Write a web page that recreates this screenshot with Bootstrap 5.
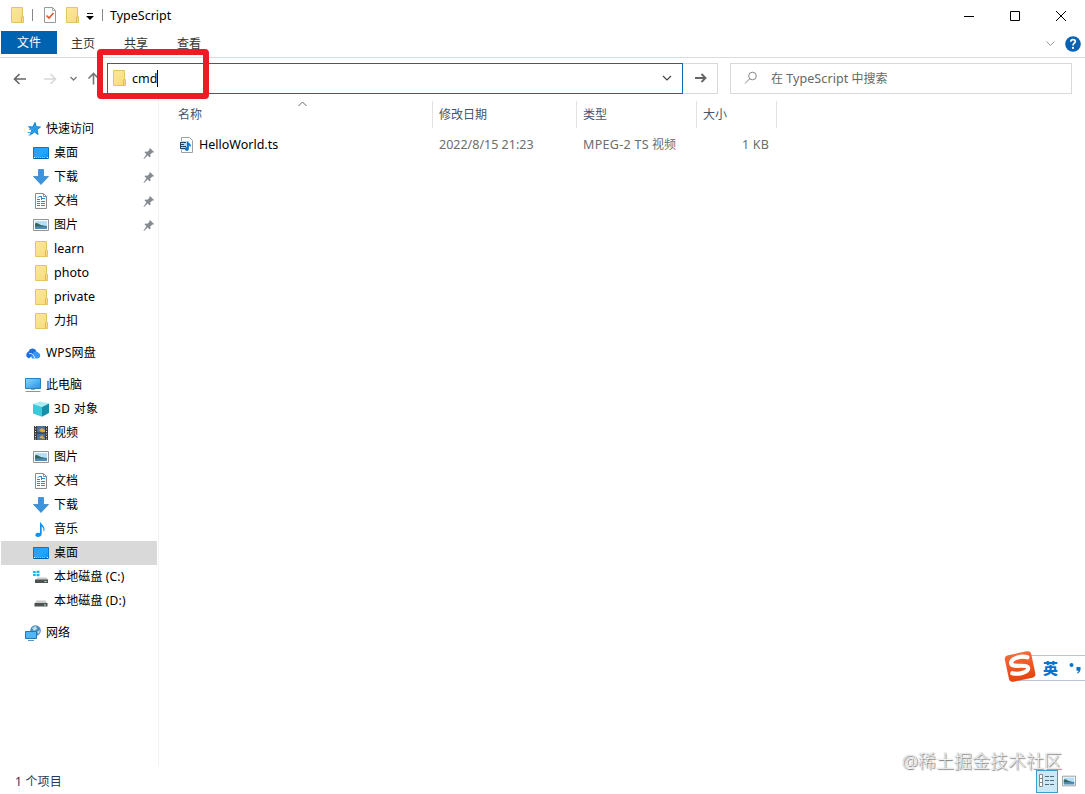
<!DOCTYPE html>
<html lang="zh-CN">
<head>
<meta charset="utf-8">
<meta name="viewport" content="width=device-width, initial-scale=1">
<title>TypeScript</title>
<link href="https://cdn.jsdelivr.net/npm/bootstrap@5.3.0/dist/css/bootstrap.min.css" rel="stylesheet">
<style>
body{font-family:"Noto Sans","Noto Sans CJK SC",sans-serif;font-size:12px;line-height:18px;color:#000;background:#fff;height:794px;overflow:hidden}
svg{display:block;flex:none}
.en{font-size:12.5px}
.titlebar{height:31px;padding-left:9px}
.titlebar>svg{margin-bottom:1px}
.vbar{width:1px;height:12px;background:#888;margin-bottom:1px}
.winctl{width:46px;height:31px}
.winctls{margin-right:1px}
.tabs{height:27px;border-bottom:1px solid #dadbdc;padding-left:1px}
.tab-file{width:56px;height:23px;padding-top:1px;background:#0063b1;color:#fff}
.tab-item{width:53px;height:26px;color:#333;padding-right:1px}
.address-row{height:40px}
.address{width:576px;height:31px;border:1px solid #0a6cb4;padding-left:4px;padding-right:10px}
.address span,.search span{padding-top:1px}
.search .en{padding-top:0}
.go{width:35px;height:31px;border:1px solid #d9d9d9;border-left:0}
.search{width:342px;height:31px;border:1px solid #d9d9d9;color:#666;padding-left:13px}
.caret{width:1px;height:17px;background:#000}
.highlight-box{left:97px;top:49px;width:112px;height:50px;border:6px solid #ed1c24;border-radius:4px}
.side{width:159px;height:668px;border-right:1px solid #f3f3f3;padding-top:19px}
.side-row{height:24px;width:156px;margin-left:1px;padding-left:32px;padding-right:2px}
.side-row.root{padding-left:24px}
.side-row.selected{background:#d9d9d9}
.side-row span{margin-left:5px}
.heads{height:30px;padding-top:3px;color:#44546f}
.heads>div{height:27px;border-right:1px solid #e3e3e3;padding-left:6px;padding-top:5px}
.c1{width:274px}.c2{width:144px}.c3{width:120px}.c4{width:80px}
.file-row{height:24px;margin-top:5px;color:#6d6d6d}
.file-row>div{padding-left:6px}
.wide{font-size:12.5px;letter-spacing:.3px}
.status{height:28px;padding:2px 9px 0 15px;color:#1e395b}
.view-active{width:22px;height:23px;border:1px solid #3aa0cf;background:#cce8f6}
.ime{left:1003px;top:649px;width:82px;height:34px}
.ime-bar{left:16px;top:6px;right:0;height:26px;border:1px solid #b9c4d4;border-right:0;background:#fff;color:#0873cc;padding-left:23px}
.ime-bar b{font-size:15px;font-weight:900}
.watermark{left:902px;top:748px;font-size:18px;line-height:26px;font-weight:300;color:#f4f4f4;text-shadow:1px 1px 1px #777,0 0 1px #999;white-space:nowrap}
</style>
<script src="https://cdn.jsdelivr.net/npm/bootstrap@5.3.0/dist/js/bootstrap.bundle.min.js"></script>
</head>
<body class="position-relative d-flex flex-column">
<svg width="0" height="0" class="position-absolute" aria-hidden="true">
<defs>
<linearGradient id="gBlue" x2="1" y2="1"><stop stop-color="#2a9df4"/><stop offset=".5" stop-color="#22a7ff"/><stop offset="1" stop-color="#1593f0"/></linearGradient>
<linearGradient id="gPc" x2="1" y2="1"><stop stop-color="#8fd6fb"/><stop offset="1" stop-color="#1d93e4"/></linearGradient>
<linearGradient id="gFold" x2="1" y2="1"><stop stop-color="#fce79e"/><stop offset="1" stop-color="#f8db7c"/></linearGradient>
<linearGradient id="gIme" x2="0" y2="1"><stop stop-color="#f26b3a"/><stop offset="1" stop-color="#e8430c"/></linearGradient>
</defs>
<symbol id="folder" viewBox="0 0 16 16"><path d="M2.500.5h11v8l1 1v6h-12z" fill="url(#gFold)" stroke="#e5c466"/><path d="M12.500 15.500V11l1-2.500" fill="none" stroke="#dfb84e"/></symbol>
<symbol id="star" viewBox="0 0 16 16"><path d="M10 1.500l1.300 4.200 4.200.3-3.500 2.600 1.100 4.900-3.500-2.400-4.300 2.700 1.500-4.800L4 6.200l3.900-.4z" fill="#2b9ce8" stroke="#1587d6"/><path d="M3 5.500h3M4 8.500h3M2.500 11.500h4M3.500 14h2" stroke="#48aaf0"/></symbol>
<symbol id="desktop" viewBox="0 0 16 16"><path d="M.5 2.500h15v11H.5z" fill="url(#gBlue)" stroke="#0d78c9"/><path d="M1 13.500h14" stroke="#075b9d"/><path d="M1 12.500h1m12 0h1" stroke="#fff"/><path d="M3 12.500h9" stroke="#7cc8fb" stroke-dasharray="1 1"/></symbol>
<symbol id="download" viewBox="0 0 16 16"><path d="M5.500.5h5v7h5L8 15.500.5 7.500h5z" fill="#3b94dc" stroke="#2d7dc5" stroke-width=".7"/></symbol>
<symbol id="doc" viewBox="0 0 16 16"><path d="M2.500.5h8l3 3v12h-11z" fill="#fff" stroke="#8c8c8c"/><path d="M10.500.5v3h3" fill="none" stroke="#8c8c8c"/><path d="M4 6.500h3M8 3.500H6L4.500 5M8.500 3v4M8 5.500h4M4 8.500h3m1 0h4M4 10.500h3m1 0h4M4 12.500h3m1 0h4" stroke="#2a8bd2" fill="none"/></symbol>
<symbol id="picture" viewBox="0 0 16 16"><path d="M.5 2.500h15v11H.5z" fill="#fff" stroke="#8f9494"/><path d="M2 4h12v8H2z" fill="#b5def8"/><path d="M2 6.500q2-1 4 .5t8 2v1H2z" fill="#35675d"/><path d="M2 9.500h12V12H2z" fill="#4c8dc0"/></symbol>
<symbol id="cloud" viewBox="0 0 16 16"><path d="M4 13.500a3.700 3.700 0 0 1-.5-7A4.300 4.300 0 0 1 11.500 6l-4 4z" fill="#1b6fe0"/><path d="M7 13.500l-1-2 2.500-4a4 4 0 0 1 5 .2 3.100 3.100 0 0 1-.5 5.800z" fill="#3a96f6"/><path d="M4 8.500q4-1 6 5" stroke="#fff" stroke-width=".8" fill="none"/></symbol>
<symbol id="pc" viewBox="0 0 16 16"><path d="M.5 1.500h15v10H.5z" fill="url(#gPc)" stroke="#2880bd"/><path d="M6 12.500h4" stroke="#aaa"/><path d="M.5 14.500h15" stroke="#8b999f"/></symbol>
<symbol id="cube" viewBox="0 0 16 16"><path d="M0 3l7-2.500L16 2.500 9 6z" fill="#a9edf4"/><path d="M0 3l9 3v9.800L0 12.500z" fill="#3cc8da"/><path d="M16 2.500L9 6v9.800l7-3.800z" fill="#168fa9"/></symbol>
<symbol id="film" viewBox="0 0 16 16"><path d="M1 1h14v14H1z" fill="#3d3d3d"/><path d="M2.500 1v14M13.500 1v14" stroke="#ddd" stroke-dasharray="1 1.500"/><path d="M4 1h8v14H4z" fill="#4b6f9f"/><path d="M6 5l3-2 3 2v2l-3 1zM6 13l3-3 3 4z" fill="#dca83a"/><path d="M4 8h8" stroke="#282d38"/></symbol>
<symbol id="music" viewBox="0 0 16 16"><path d="M7 .5c1 3 5 4 4.500 9l-1 .7c.3-3-.8-4.200-1.800-4.700V13c0 2-2 3-3.700 3C1.500 16 1.500 12 5 11.800l2 .2z" fill="#0d91f5"/></symbol>
<symbol id="disk" viewBox="0 0 16 16"><path d="M3.500 7.500h9l2 3H2z" fill="#c8cac9"/><path d="M1.500 10h13v3.500h-13z" fill="#4d5250"/><path d="M11 12h2" stroke="#a8f1c4"/></symbol>
<symbol id="diskc" viewBox="0 0 16 16"><path d="M4.500 8.500h9l1.500 2.500H2.500z" fill="#c8cac9"/><path d="M2 10.500h13v3.500H2z" fill="#4d5250"/><path d="M11.500 12.500h2" stroke="#a8f1c4"/><path d="M0 2h2.700v2H0zM3.500 1.700H6.500V4h-3zM0 5h2.700v2H0zM3.500 5h3v2.300h-3z" fill="#12bbe3"/></symbol>
<symbol id="net" viewBox="0 0 16 16"><circle cx="10.500" cy="5.500" r="5.300" fill="#4c8eb9"/><path d="M7 3l4-2 1 3-3 2zM12 7l3-2-1 4z" fill="#b8ddeb"/><path d="M.5 6.500h11v7H.5z" fill="#52b5f4" stroke="#1d79b9"/><path d="M3 15.500h6" stroke="#5498bf"/></symbol>
<symbol id="pin" viewBox="0 0 12 12"><path d="M7 1l4 4-1 .7-.7-.2-2 2 .2 2.200-.8.800-2-2L1 12l-.5-.5L3.500 7.300l-2-2 .8-.8 2.200.2 2-2-.2-.7z" fill="#858b90"/></symbol>
<symbol id="media" viewBox="0 0 16 16"><path d="M2.500.5h8l3 3v12h-11z" fill="#fff" stroke="#a0a0a0"/><path d="M2 4h8v9H2z" fill="#b5d9f5"/><path d="M1 5.500h6M1 7.500h4M2 9.500h5M1 11.500h5M1.500 5v7" stroke="#24486b"/><path d="M8 4c1 2 4 2 4 5.500h-1.200L9.800 8v4a2 2 0 1 1-1.800-2z" fill="#0875cb"/></symbol>
</svg>

<header>
<div class="titlebar d-flex align-items-center">
<svg width="16" height="16"><use href="#folder"/></svg>
<i class="vbar" style="margin-left:7px"></i>
<svg width="16" height="16" viewBox="0 0 16 16" style="margin-left:9px"><path d="M2.500.5h8l3 3v12h-11z" fill="#fff" stroke="#999"/><path d="M10.500.5v3h3" fill="none" stroke="#aaa"/><path d="M4.500 8.500l2.500 2.500 4.500-5" stroke="#e9582b" stroke-width="1.700" fill="none"/></svg>
<svg width="16" height="16" style="margin-left:6px"><use href="#folder"/></svg>
<svg width="8" height="8" viewBox="0 0 8 8" style="margin-left:6px;margin-bottom:-2px"><path d="M1 .5h6" stroke="#111"/><path d="M0 3h8L4 7z"/></svg>
<i class="vbar" style="margin-left:8px"></i>
<span class="en" style="margin-left:7px">TypeScript</span>
<div class="winctls d-flex ms-auto">
<div class="winctl d-flex align-items-center justify-content-center"><svg width="10" height="10"><path d="M0 5.500h10" stroke="#000"/></svg></div>
<div class="winctl d-flex align-items-center justify-content-center"><svg width="10" height="10"><path d="M.5.5h9v9h-9z" fill="none" stroke="#000"/></svg></div>
<div class="winctl d-flex align-items-center justify-content-center"><svg width="10" height="10"><path d="M0 0l10 10M10 0L0 10" stroke="#000"/></svg></div>
</div>
</div>
<nav class="tabs d-flex">
<div class="tab-file d-flex align-items-center justify-content-center">文件</div>
<div class="tab-item d-flex align-items-center justify-content-center">主页</div>
<div class="tab-item d-flex align-items-center justify-content-center">共享</div>
<div class="tab-item d-flex align-items-center justify-content-center">查看</div>
<div class="ms-auto d-flex align-items-center" style="padding-right:4px;gap:10px">
<svg width="9" height="6"><path d="M.5.5l4 4 4-4" fill="none" stroke="#999"/></svg>
<svg width="16" height="16" viewBox="0 0 16 16"><circle cx="8" cy="8" r="7.800" fill="#0863b5"/><path d="M5.800 5.800c0-3 4.500-2.700 4.500-.3C10.300 7.200 8 7.300 8 9.500" fill="none" stroke="#fff" stroke-width="1.700"/><circle cx="8" cy="11.900" r="1.100" fill="#fff"/></svg>
</div>
</nav>
<div class="address-row d-flex align-items-center">
<svg width="107" height="31"><g fill="none" stroke="#666" stroke-width="1.600"><path d="M26 16H14.500M19.500 11l-5 5 5 5"/><path d="M44 16h11.500M50.500 11l5 5-5 5" stroke="#d8d8d8"/><path d="M70.500 14l3 3 3-3" stroke="#777" stroke-width="1.300"/><path d="M93.500 21.500V10.500M88.500 15.500l5-5 5 5" stroke="#777"/></g></svg>
<div class="address d-flex align-items-center">
<svg width="16" height="16" style="margin-left:-1px"><use href="#folder"/></svg><span class="en" style="margin-left:5px">cmd</span><i class="caret"></i>
<svg class="ms-auto" width="10" height="7"><path d="M1 1l4 4 4-4" fill="none" stroke="#444" stroke-width="1.200"/></svg>
</div>
<div class="go d-flex align-items-center justify-content-center"><svg width="12" height="10" style="margin-left:1px"><path d="M0 5h10.500M6.500 1l4 4-4 4" fill="none" stroke="#666" stroke-width="1.900"/></svg></div>
<div class="search d-flex align-items-center" style="margin-left:12px"><svg width="14" height="14"><circle cx="8.500" cy="5" r="3.800" fill="none" stroke="#888"/><path d="M5.800 7.700L1 12.500" stroke="#888"/></svg><span style="margin-left:13px">在 <span class="en" style="letter-spacing:.1px">TypeScript</span> 中搜索</span></div>
</div>
</header>

<main class="d-flex">
<aside class="side">
<div class="side-row root d-flex align-items-center"><svg width="16" height="16"><use href="#star"/></svg><span>快速访问</span></div>
<div class="side-row d-flex align-items-center"><svg width="16" height="16"><use href="#desktop"/></svg><span>桌面</span><svg class="ms-auto" width="12" height="12"><use href="#pin"/></svg></div>
<div class="side-row d-flex align-items-center"><svg width="16" height="16"><use href="#download"/></svg><span>下载</span><svg class="ms-auto" width="12" height="12"><use href="#pin"/></svg></div>
<div class="side-row d-flex align-items-center"><svg width="16" height="16"><use href="#doc"/></svg><span>文档</span><svg class="ms-auto" width="12" height="12"><use href="#pin"/></svg></div>
<div class="side-row d-flex align-items-center"><svg width="16" height="16"><use href="#picture"/></svg><span>图片</span><svg class="ms-auto" width="12" height="12"><use href="#pin"/></svg></div>
<div class="side-row d-flex align-items-center"><svg width="16" height="16"><use href="#folder"/></svg><span class="en">learn</span></div>
<div class="side-row d-flex align-items-center"><svg width="16" height="16"><use href="#folder"/></svg><span class="en">photo</span></div>
<div class="side-row d-flex align-items-center"><svg width="16" height="16"><use href="#folder"/></svg><span class="en">private</span></div>
<div class="side-row d-flex align-items-center"><svg width="16" height="16"><use href="#folder"/></svg><span>力扣</span></div>
<div class="side-row root d-flex align-items-center mt-2"><svg width="16" height="16"><use href="#cloud"/></svg><span style="letter-spacing:.2px">WPS网盘</span></div>
<div class="side-row root d-flex align-items-center mt-2"><svg width="16" height="16"><use href="#pc"/></svg><span>此电脑</span></div>
<div class="side-row d-flex align-items-center"><svg width="16" height="16"><use href="#cube"/></svg><span style="letter-spacing:.3px">3D 对象</span></div>
<div class="side-row d-flex align-items-center"><svg width="16" height="16"><use href="#film"/></svg><span>视频</span></div>
<div class="side-row d-flex align-items-center"><svg width="16" height="16"><use href="#picture"/></svg><span>图片</span></div>
<div class="side-row d-flex align-items-center"><svg width="16" height="16"><use href="#doc"/></svg><span>文档</span></div>
<div class="side-row d-flex align-items-center"><svg width="16" height="16"><use href="#download"/></svg><span>下载</span></div>
<div class="side-row d-flex align-items-center"><svg width="16" height="16"><use href="#music"/></svg><span>音乐</span></div>
<div class="side-row selected d-flex align-items-center"><svg width="16" height="16"><use href="#desktop"/></svg><span>桌面</span></div>
<div class="side-row d-flex align-items-center"><svg width="16" height="16"><use href="#diskc"/></svg><span style="letter-spacing:.15px">本地磁盘 (C:)</span></div>
<div class="side-row d-flex align-items-center"><svg width="16" height="16"><use href="#disk"/></svg><span style="letter-spacing:.15px">本地磁盘 (D:)</span></div>
<div class="side-row root d-flex align-items-center mt-2"><svg width="16" height="16"><use href="#net"/></svg><span>网络</span></div>
</aside>
<section class="flex-fill">
<div class="heads d-flex">
<div class="c1 position-relative" style="padding-left:19px">名称<svg class="position-absolute" style="left:139px;top:0" width="9" height="6"><path d="M.5 5l4-4 4 4" fill="none" stroke="#666"/></svg></div>
<div class="c2">修改日期</div><div class="c3">类型</div><div class="c4">大小</div>
</div>
<div class="file-row d-flex align-items-center">
<div class="c1 d-flex align-items-center text-black" style="padding-left:20px"><svg width="16" height="16"><use href="#media"/></svg><span class="en" style="margin-left:4px">HelloWorld.ts</span></div>
<div class="c2 en">2022/8/15 21:23</div><div class="c3"><span class="wide">MPEG-2 TS</span> 视频</div><div class="c4 en text-end" style="padding-right:8px;letter-spacing:.2px">1 KB</div>
</div>
</section>
</main>
<footer class="status d-flex align-items-center">
<span style="padding-top:1px;letter-spacing:.2px">1 个项目</span>
<div class="d-flex align-items-center ms-auto" style="gap:4px">
<div class="view-active d-flex align-items-center justify-content-center"><svg width="16" height="14"><path d="M.5.5h3v12h-3zM.5 4.500h3M.5 8.500h3" fill="#fff" stroke="#888"/><path d="M6 2.500h4m1 0h4M6 6.500h4m1 0h4M6 10.500h4m1 0h4" stroke="#536a76"/></svg></div>
<svg width="14" height="16" viewBox="0 0 16 16"><use href="#picture"/></svg>
</div>
</footer>

<div class="highlight-box position-absolute"></div>
<div class="ime position-absolute">
<div class="ime-bar position-absolute d-flex align-items-center"><b>英</b><svg width="16" height="16" style="margin-left:10px"><circle cx="3.500" cy="5" r="2" fill="#0873cc"/><path d="M8.500 7h4v3q-.5 3-3.200 3.700v-1.400q1.300-.5 1.200-1.500h-2z" fill="#0873cc"/></svg></div>
<svg class="position-absolute" width="34" height="34" viewBox="0 0 34 34"><g transform="rotate(-12 17 17)"><rect x="3.500" y="4" width="27" height="27" rx="4" fill="url(#gIme)"/><path d="M26 10C20 6.500 8.500 8 9 13c.5 4.500 15.500 3 15.500 7.500 0 4-10.500 5-16.500 2" fill="none" stroke="#fff" stroke-width="4.200" stroke-linecap="round"/></g></svg>
</div>
<div class="watermark position-absolute">@稀土掘金技术社区</div>
</body>
</html>
